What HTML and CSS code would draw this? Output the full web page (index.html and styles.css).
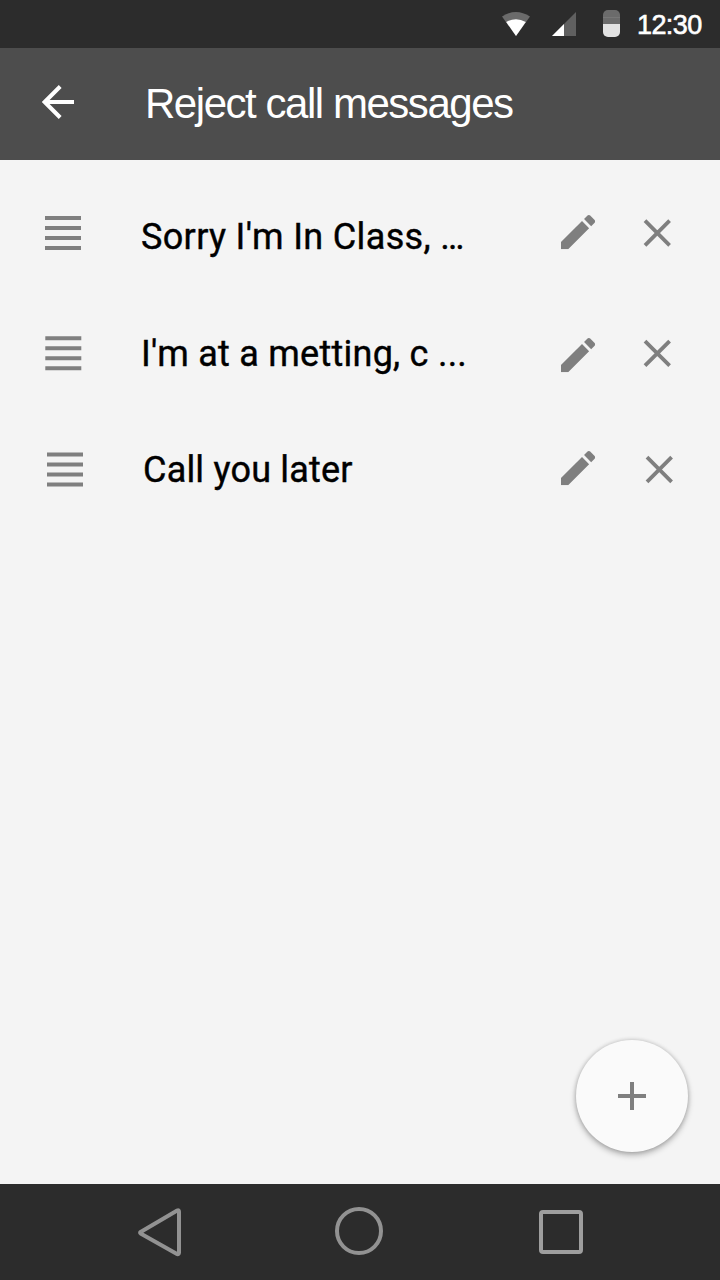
FILE: index.html
```html
<!DOCTYPE html>
<html lang="en">
<head>
<meta charset="utf-8">
<title>Reject call messages</title>
<link rel="stylesheet" href="styles.css">
</head>
<body>
<svg class="defs" aria-hidden="true">
  <symbol id="handle" viewBox="0 0 36 34" overflow="visible"><path d="M0 0h36v4H0zM0 10h36v4H0zM0 20h36v4H0zM0 30h36v4H0z"/></symbol>
  <symbol id="pencil" viewBox="3 3 18 18"><path d="M3 17.25V21h3.75L17.81 9.94l-3.75-3.75L3 17.25zM20.71 7.04c.39-.39.39-1.02 0-1.41l-2.34-2.34c-.39-.39-1.02-.39-1.41 0l-1.83 1.83 3.75 3.75 1.83-1.83z"/></symbol>
  <symbol id="cross" viewBox="0 0 28 28" overflow="visible"><path d="M1.7 1.7l24.6 24.6M26.3 1.7L1.7 26.3" fill="none" stroke="currentColor" stroke-width="3.8"/></symbol>
</svg>
<div class="screen">
  <div class="status-bar">
    <svg class="wifi" width="28" height="24" viewBox="0 0 28 24"><path d="M0 4.5Q14-4.5 28 4.5L14 24z" fill="#6b6b6b"/><path d="M4.2 10Q14 4.300 23.800 10L14 24z" fill="#fff"/></svg>
    <svg class="signal" width="24" height="24" viewBox="0 0 24 24"><path d="M24 0v24H0z" fill="#606060"/><path d="M12 12v12H0z" fill="#fff"/></svg>
    <span class="battery"></span>
    <span class="clock">12:30</span>
  </div>
  <header class="app-bar">
    <svg class="back" width="32" height="34" viewBox="0 0 32 34"><path d="M18.200 1.500L2.700 17l15.500 15.500M2.500 17H32" fill="none" stroke="#fff" stroke-width="4"/></svg>
    <h1 class="title">Reject call messages</h1>
  </header>
  <main class="content">
    <ul class="messages">
      <li class="message first">
        <svg class="handle"><use href="#handle"/></svg>
        <span class="text">Sorry I'm In Class, …</span>
        <svg class="pencil"><use href="#pencil"/></svg>
        <svg class="cross"><use href="#cross"/></svg>
      </li>
      <li class="message second">
        <svg class="handle"><use href="#handle"/></svg>
        <span class="text">I'm at a metting, c ...</span>
        <svg class="pencil"><use href="#pencil"/></svg>
        <svg class="cross"><use href="#cross"/></svg>
      </li>
      <li class="message third">
        <svg class="handle"><use href="#handle"/></svg>
        <span class="text">Call you later</span>
        <svg class="pencil"><use href="#pencil"/></svg>
        <svg class="cross"><use href="#cross"/></svg>
      </li>
    </ul>
    <button class="fab" aria-label="Add message"><svg width="28" height="28" viewBox="0 0 28 28"><path d="M12 0h4v12h12v4H16v12h-4V16H0v-4h12z" fill="#7f7f7f"/></svg></button>
  </main>
  <nav class="nav-bar">
    <svg class="nav-back" width="44" height="50" viewBox="0 0 44 50"><path d="M39.200 3.500L2.600 25Q1.600 25.700 2.600 26.400L39 47.100Q41 47.600 41 45.600V4.800Q41 2.600 39.200 3.500z" fill="none" stroke="#929292" stroke-width="4" stroke-linejoin="round"/></svg>
    <span class="nav-home"></span>
    <span class="nav-recent"></span>
  </nav>
</div>
</body>
</html>
```
FILE: styles.css
```css
* { box-sizing: border-box; }
body { margin: 0; background: #f4f4f4; }
.defs { display: none; }
.screen { width: 720px; height: 1280px; display: flex; flex-direction: column; overflow: hidden; }
.status-bar {
  height: 48px; background: #2c2c2c; color: #fff;
  display: flex; align-items: flex-start; padding-left: 502px;
}
.wifi { margin-top: 12px; }
.signal { margin: 12px 0 0 22px; }
.battery {
  width: 17px; height: 27px; margin: 10px 0 0 27px; border-radius: 5px;
  background: linear-gradient(#6b6b6b 0 7px, #777 7px 8px, #6b6b6b 8px 14px, #e2e2e2 14px);
}
.clock {
  margin: 10px 0 0 17px; line-height: 30px; white-space: nowrap;
  font-family: "Liberation Sans", Arial, sans-serif; font-size: 27px;
  letter-spacing: -0.6px; -webkit-text-stroke: 0.6px #fff;
}
.app-bar { height: 112px; background: #4d4d4d; display: flex; align-items: flex-start; padding-left: 42px; }
.back { margin-top: 37px; }
.title {
  margin: 31px 0 0 71px; color: #fff; white-space: nowrap;
  font: 400 42px/50px "Liberation Sans", Arial, sans-serif; letter-spacing: -1.46px;
}
.content { flex: 1; display: flex; flex-direction: column; justify-content: space-between; padding: 16px 0 32px; background: #f4f4f4; }
.messages { list-style: none; margin: 0; padding: 0; }
.message {
  height: 117px; padding-left: 45px; color: #7f7f7f;
  display: grid; grid-template-columns: 96px 420px 82.300px 28px; align-items: start;
}
.message svg { fill: currentColor; overflow: visible; }
.handle { width: 36px; height: 34px; margin-top: 40px; }
.text {
  margin-top: 40px; color: #000; white-space: nowrap;
  font: 400 36px/42px Roboto, sans-serif; letter-spacing: 0.34px; -webkit-text-stroke: 0.4px #000;
}
.pencil { width: 34.200px; height: 34.200px; margin-top: 39px; }
.cross { width: 28px; height: 28px; margin-top: 43px; }
.cross use { transform: translateX(.3px); }
.second .handle { margin-top: 43px; }
.second .handle use { transform: translate(.3px, .3px); }
.second .text { letter-spacing: 0.25px; }
.second .pencil { margin-top: 45.300px; }
.second .cross { margin-top: 46px; }
.second .cross use { transform: translate(.3px, .4px); }
.third .handle { margin: 42px 0 0 2px; }
.third .handle use { transform: translateY(.5px); }
.third .text { margin: 39px 0 0 2px; letter-spacing: 0.2px; }
.third .pencil { margin-top: 40.500px; }
.third .cross { margin: 45px 0 0 2px; }
.third .cross use { transform: translate(.3px, .5px); }
.fab {
  align-self: flex-end; width: 112px; height: 112px; margin-right: 32px; padding: 0;
  border: 0; border-radius: 50%; background: #fafafa;
  display: flex; align-items: center; justify-content: center;
  box-shadow: 0 0 4px rgba(0, 0, 0, .18), 0 3px 6px rgba(0, 0, 0, .28);
}
.nav-bar { height: 96px; background: #2c2c2c; display: flex; align-items: flex-start; padding-left: 138px; }
.nav-back { margin-top: 23px; }
.nav-home { width: 48px; height: 48px; margin: 23px 0 0 153px; border: 4px solid #929292; border-radius: 50%; }
.nav-recent { width: 44px; height: 44px; margin: 26px 0 0 156px; border: 4px solid #9e9e9e; border-radius: 4px; }
```
